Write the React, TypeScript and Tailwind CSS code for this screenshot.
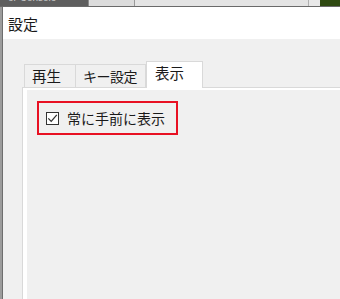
import React from "react";

export default function App() {
  const font = { fontFamily: '"Noto Sans CJK JP", "Noto Sans", sans-serif' };
  return (
    <div className="w-[340px] h-[299px] overflow-hidden bg-[#f0f0f0] flex flex-col" style={font}>
      {/* background strip from window behind */}
      <div className="h-[6px] flex shrink-0 overflow-hidden">
        <div className="w-[88px] bg-[#5e5e5e] relative overflow-hidden">
          <span className="absolute left-[8px] top-[-8px] text-[10px] leading-[12px] text-[#c8c8c8] whitespace-nowrap" style={{ fontFamily: '"Liberation Sans", sans-serif' }}>
            er Console
          </span>
        </div>
        <div className="w-[46px] bg-[#dcdcdc] border-l border-[#8a8a8a]" />
        <div className="w-[174px] bg-[#e4e4e4] border-l border-[#9a9a9a]" />
        <div className="w-[12px] bg-[#e8e8e8] border-l border-[#b0b0b0]" />
        <div className="flex-1 bg-[#2f4a12]" />
      </div>
      <div className="h-[1px] bg-[#6a6a6a] shrink-0" />
      <div className="flex flex-1 min-h-0">
        {/* left window edge */}
        <div className="w-[2px] bg-[#9c9c9c] shrink-0" />
        <div className="w-[1px] bg-[#6e6e6e] shrink-0" />
        <div className="flex-1 flex flex-col min-w-0">
          {/* title bar */}
          <div className="h-[32px] bg-white flex items-center pl-[5px] shrink-0">
            <span className="text-[15px] leading-none text-[#1a1a1a]">設定</span>
          </div>
          {/* body */}
          <div className="flex-1 bg-[#f0f0f0] pt-[22px] pl-[19px] flex flex-col min-h-0">
            {/* tabs */}
            <div className="flex items-end h-[26px] pl-[2px] shrink-0">
              <div className="w-[52px] h-[23px] border border-b-0 border-[#d9d9d9] bg-[#f0f0f0] flex items-center pl-[7px] text-[14.5px] text-[#1a1a1a] leading-none">
                再生
              </div>
              <div className="w-[70px] h-[23px] border border-b-0 border-l-0 border-[#d9d9d9] bg-[#f0f0f0] flex items-center pl-[7px] text-[14px] text-[#1a1a1a] leading-none tracking-[-0.5px]">
                キー設定
              </div>
              <div className="w-[57px] h-[27px] -mb-[1px] relative z-10 border border-b-0 border-[#d9d9d9] bg-white flex items-start pt-[4px] pl-[8px] text-[14.5px] text-[#1a1a1a] leading-none">
                表示
              </div>
            </div>
            {/* panel */}
            <div className="flex-1 border-t border-l border-[#d9d9d9] bg-white pl-[4px] pt-[2px] flex flex-col min-h-0">
              <div className="flex-1 bg-[#f0f0f0] pt-[11px] pl-[10px]">
                <div className="w-[141px] h-[34px] border-2 border-[#e81123] flex items-center pl-[7px]">
                  <div className="w-[13px] h-[13px] border border-[#333333] bg-white flex items-center justify-center">
                    <svg width="11" height="11" viewBox="0 0 11 11">
                      <path d="M1.3 5.4 L4.2 8.4 L9.8 1.8" fill="none" stroke="#333333" strokeWidth="1.3" />
                    </svg>
                  </div>
                  <span className="ml-[8px] text-[14px] leading-none text-[#1a1a1a] whitespace-nowrap">常に手前に表示</span>
                </div>
              </div>
            </div>
          </div>
        </div>
      </div>
    </div>
  );
}
